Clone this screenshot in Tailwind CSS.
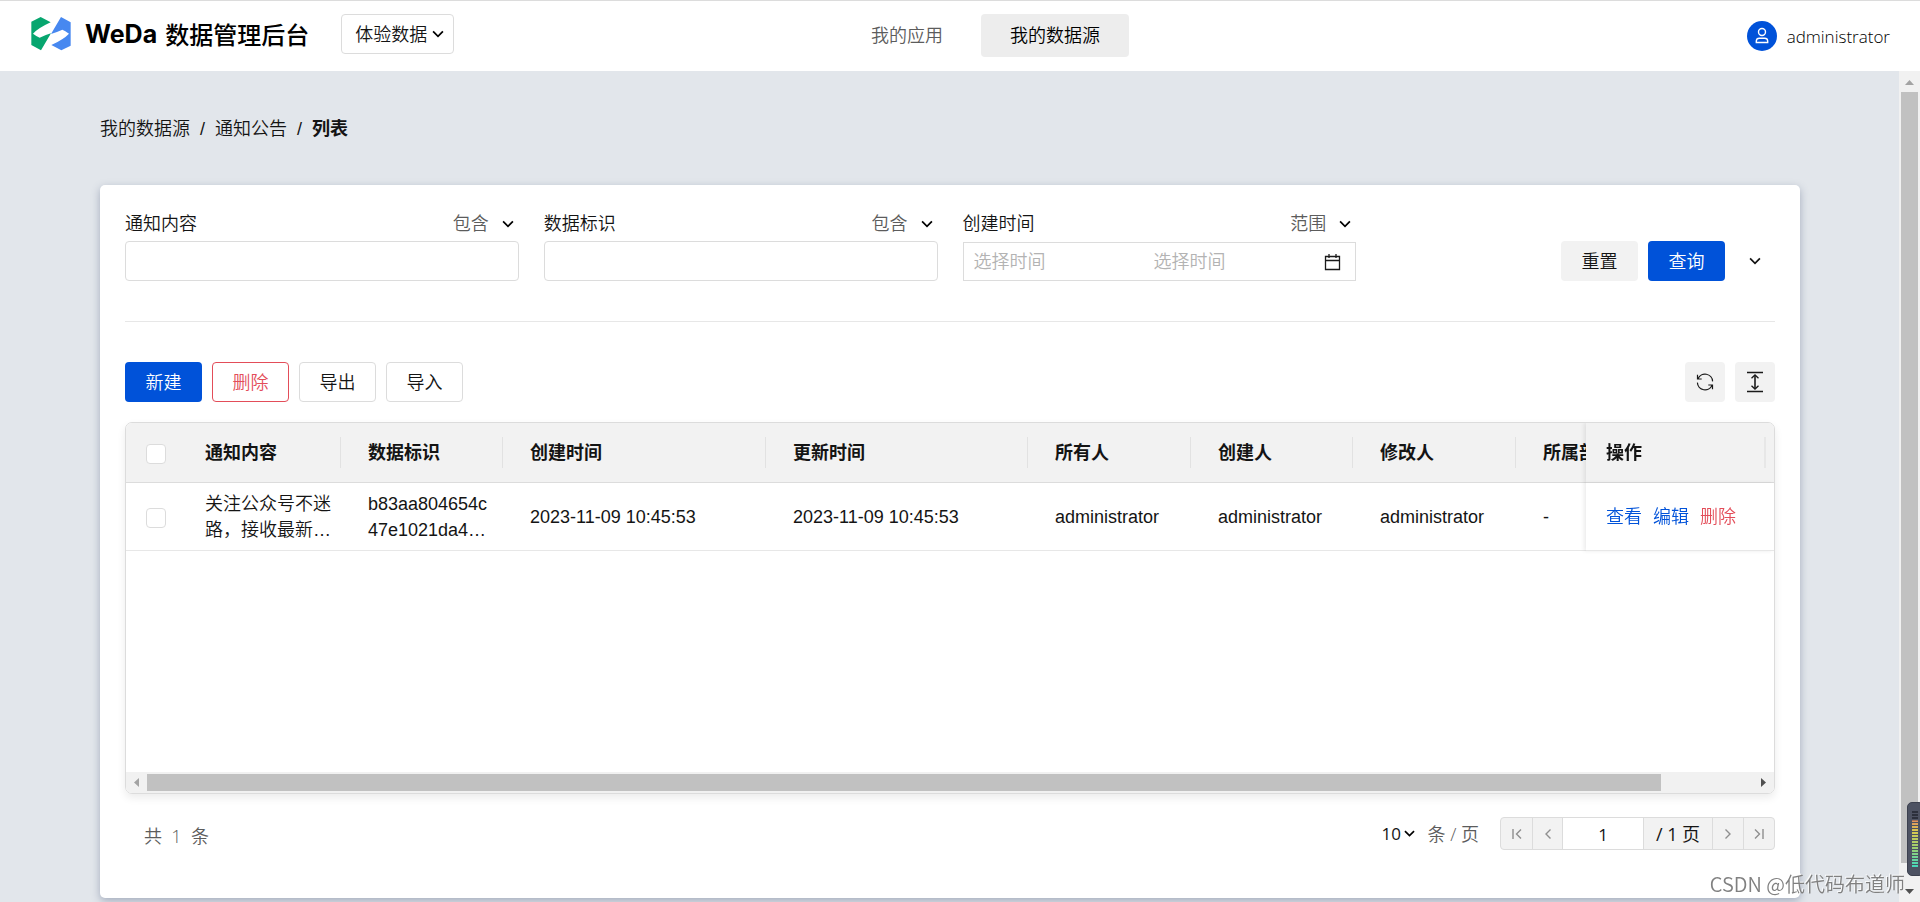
<!DOCTYPE html>
<html lang="zh-CN">
<head>
<meta charset="utf-8">
<title>WeDa 数据管理后台</title>
<script src="https://cdn.jsdelivr.net/npm/@tailwindcss/browser@4"></script>
</head>
<body class="flex h-screen flex-col overflow-hidden bg-[#e2e6eb] font-['Liberation_Sans','Noto_Sans_CJK_SC',sans-serif] text-[18px] leading-[26px] font-[350] text-[#141414]">
<svg class="hidden" aria-hidden="true">
  <symbol id="chev" viewBox="0 0 12 12"><path d="M1.800 3.800 6 8l4.200-4.200" fill="none" stroke="currentColor" stroke-width="1.500"/></symbol>
</svg>

<header class="grid h-[71px] shrink-0 grid-cols-[1fr_auto_1fr] items-center border-t border-[#dcdcdc] bg-white px-[30px]">
  <div class="flex items-center pb-[4px]">
    <svg class="h-[36px] w-[42px]" viewBox="91 52 126 108" aria-hidden="true">
      <path fill="#07a66f" d="M95 69 123 55 153 71Q116 88 100 105Q112 114 120 117Q140 108 154 104L124 155 95 139Z"/>
      <path fill="#4788f0" d="M213 141 185 155 155 139Q192 122 208 105Q196 96 188 93Q168 102 154 106L184 55 213 71Z"/>
    </svg>
    <h1 class="ml-[13px] flex items-center gap-[8px] text-[24px] leading-[36px] font-bold whitespace-nowrap text-black"><span class="font-['Inter',sans-serif] text-[25px]">WeDa</span><span class="font-['Noto_Sans_CJK_SC',sans-serif] font-medium">数据管理后台</span></h1>
    <label class="relative ml-[32px] flex items-center">
      <span class="sr-only">环境</span>
      <select class="h-[40px] w-[113px] appearance-none rounded-[4px] border border-[#dcdcdc] bg-white pt-[2px] pl-[13px]"><option>体验数据</option></select>
      <svg class="pointer-events-none absolute right-[9px] size-[14px] text-black"><use href="#chev"/></svg>
    </label>
  </div>
  <nav class="flex gap-[8px] pb-px pl-[50px]">
    <a href="#" class="rounded-[4px] px-[30px] pt-[9px] pb-[7px] leading-[27px] text-[#5c5c5c]">我的应用</a>
    <a href="#" class="rounded-[4px] bg-[#ededed] px-[29px] pt-[9px] pb-[7px] leading-[27px] text-black">我的数据源</a>
  </nav>
  <div class="flex items-center justify-end gap-[10px]">
    <svg class="size-[30px]" viewBox="0 0 30 30" aria-hidden="true">
      <circle cx="15" cy="15" r="15" fill="#0052d9"/>
      <g fill="none" stroke="#fff" stroke-width="1.400"><circle cx="15" cy="11" r="3.500"/><path d="M9.300 21.500v-1.500a3 3 0 0 1 3-2.800h5.400a3 3 0 0 1 3 2.800v1.500z"/></g>
    </svg>
    <span class="pt-px font-['Open_Sans','Noto_Sans',sans-serif] text-[17px] font-light text-black">administrator</span>
  </div>
</header>

<div class="flex min-h-0 flex-1">
  <main class="min-w-0 flex-1 overflow-hidden pt-[45px] pr-[99px] pl-[100px]">
    <nav aria-label="路径" class="mb-[43px] flex gap-[10px]">
      <a href="#">我的数据源</a><span>/</span><a href="#">通知公告</a><span>/</span><span class="font-bold">列表</span>
    </nav>

    <section class="rounded-[5px] bg-white px-[25px] pt-[24px] pb-[48px] shadow-[0_3px_8px_rgba(70,85,120,0.400)]">
      <form class="grid grid-cols-4 gap-x-[25px] border-b border-[#e7e7e7] pb-[40px]">
        <div>
          <div class="mb-[3px] flex h-[29px] items-center justify-between">
            <label for="f1">通知内容</label>
            <div class="relative flex items-center"><select aria-label="通知内容条件" class="w-[66px] appearance-none bg-transparent text-[#5c5c5c]"><option>包含</option></select><svg class="pointer-events-none absolute right-[4px] size-[14px] text-black"><use href="#chev"/></svg></div>
          </div>
          <input id="f1" type="text" class="block h-[40px] w-full rounded-[4px] border border-[#dcdcdc] px-[10px]">
        </div>
        <div>
          <div class="mb-[3px] flex h-[29px] items-center justify-between">
            <label for="f2">数据标识</label>
            <div class="relative flex items-center"><select aria-label="数据标识条件" class="w-[66px] appearance-none bg-transparent text-[#5c5c5c]"><option>包含</option></select><svg class="pointer-events-none absolute right-[4px] size-[14px] text-black"><use href="#chev"/></svg></div>
          </div>
          <input id="f2" type="text" class="block h-[40px] w-full rounded-[4px] border border-[#dcdcdc] px-[10px]">
        </div>
        <div>
          <div class="mb-[4px] flex h-[29px] items-center justify-between">
            <label for="f3">创建时间</label>
            <div class="relative flex items-center"><select aria-label="创建时间条件" class="w-[66px] appearance-none bg-transparent text-[#5c5c5c]"><option>范围</option></select><svg class="pointer-events-none absolute right-[4px] size-[14px] text-black"><use href="#chev"/></svg></div>
          </div>
          <div class="flex h-[39px] items-center border border-[#dcdcdc] pt-px pr-[14px] pl-[10px]">
            <input id="f3" type="text" placeholder="选择时间" class="w-[180px] min-w-0 placeholder:text-[#b3b3b3]">
            <input type="text" aria-label="结束时间" placeholder="选择时间" class="min-w-0 flex-1 placeholder:text-[#b3b3b3]">
            <svg class="size-[18px]" viewBox="0 0 18 18" fill="none" stroke="#1a1a1a" stroke-width="1.300" aria-hidden="true"><path d="M2.500 3.500h14v13h-14zM2.500 7.500h14M6 1v4M13 1v4"/></svg>
          </div>
        </div>
        <div class="flex items-end justify-end gap-[10px]">
          <button type="reset" class="h-[40px] w-[77px] rounded-[4px] bg-[#f2f2f2] pt-px">重置</button>
          <button type="submit" class="h-[40px] w-[77px] rounded-[4px] bg-[#0052d9] pt-px text-white">查询</button>
          <button type="button" aria-label="展开" class="flex size-[40px] items-center justify-center"><svg class="size-[14px]"><use href="#chev"/></svg></button>
        </div>
      </form>

      <div class="flex gap-[10px] pt-[40px] pb-[20px]">
        <button class="h-[40px] w-[77px] rounded-[4px] bg-[#0052d9] pt-px text-white">新建</button>
        <button class="h-[40px] w-[77px] rounded-[4px] border border-[#e34d59] pt-px text-[#e34d59]">删除</button>
        <button class="h-[40px] w-[77px] rounded-[4px] border border-[#dcdcdc] pt-px">导出</button>
        <button class="h-[40px] w-[77px] rounded-[4px] border border-[#dcdcdc] pt-px">导入</button>
        <button aria-label="刷新" class="ml-auto flex size-[40px] items-center justify-center rounded-[4px] bg-[#f2f2f2]">
          <svg class="size-[18px]" viewBox="0 0 18 18" fill="none" stroke="#1a1a1a" stroke-width="1.200" aria-hidden="true"><path d="M1.500 1.800v4.200h4.200M2 5.800a7.600 7.600 0 0 1 14.600 2.600M16.500 16.200V12h-4.200M16 12.200A7.600 7.600 0 0 1 1.400 9.600"/></svg>
        </button>
        <button aria-label="行高" class="flex size-[40px] items-center justify-center rounded-[4px] bg-[#f2f2f2]">
          <svg class="h-[22px] w-[18px]" viewBox="0 0 18 22" fill="none" stroke="#1a1a1a" stroke-width="1.300" aria-hidden="true"><path d="M1 1.500h16M1 20.500h16M5.500 7.300 9 4l3.500 3.300M5.500 14.700 9 18l3.500-3.300"/><path d="M9 4v14" stroke-width="1.600"/></svg>
        </button>
      </div>

      <div class="overflow-hidden rounded-[7px] border border-[#dcdcdc] shadow-[0_4px_8px_rgba(0,0,0,0.080)]">
        <div class="h-[349px] overflow-hidden">
          <table class="w-[1745px] table-fixed border-separate border-spacing-0 text-left">
            <colgroup><col class="w-[54px]"><col class="w-[163px]"><col class="w-[162px]"><col class="w-[263px]"><col class="w-[262px]"><col class="w-[163px]"><col class="w-[162px]"><col class="w-[163px]"><col><col class="w-[188px]"></colgroup>
            <thead>
              <tr class="h-[60px] bg-[#f2f2f2] font-bold *:border-b *:border-[#dcdcdc]">
                <th class="pt-[2px] pl-[20px]"><input type="checkbox" aria-label="全选" class="block size-[20px] appearance-none rounded-[4px] border border-[#dcdcdc] bg-white"></th>
                <th class="pr-[2px] pl-[25px]"><div class="flex h-[31px] items-center border-r border-[#e2e2e2]">通知内容</div></th>
                <th class="pr-[2px] pl-[25px]"><div class="flex h-[31px] items-center border-r border-[#e2e2e2]">数据标识</div></th>
                <th class="pr-[2px] pl-[25px]"><div class="flex h-[31px] items-center border-r border-[#e2e2e2]">创建时间</div></th>
                <th class="pr-[2px] pl-[25px]"><div class="flex h-[31px] items-center border-r border-[#e2e2e2]">更新时间</div></th>
                <th class="pr-[2px] pl-[25px]"><div class="flex h-[31px] items-center border-r border-[#e2e2e2]">所有人</div></th>
                <th class="pr-[2px] pl-[25px]"><div class="flex h-[31px] items-center border-r border-[#e2e2e2]">创建人</div></th>
                <th class="pr-[2px] pl-[25px]"><div class="flex h-[31px] items-center border-r border-[#e2e2e2]">修改人</div></th>
                <th class="pl-[25px]"><div class="flex h-[31px] items-center whitespace-nowrap">所属部门</div></th>
                <th class="sticky right-0 bg-[#f2f2f2] pr-[8px] pl-[20px] shadow-[-2px_0_4px_rgba(0,0,0,0.080)]"><div class="flex h-[31px] items-center border-r-2 border-[#e7e7e7]">操作</div></th>
              </tr>
            </thead>
            <tbody>
              <tr class="h-[68px] *:border-b *:border-[#e7e7e7]">
                <td class="pt-[2px] pl-[20px]"><input type="checkbox" aria-label="选择此行" class="block size-[20px] appearance-none rounded-[4px] border border-[#dcdcdc] bg-white"></td>
                <td class="pr-[10px] pl-[25px] break-all">关注公众号不迷路，接收最新…</td>
                <td class="pr-[16px] pl-[25px] break-all">b83aa804654c47e1021da4…</td>
                <td class="pl-[25px]">2023-11-09 10:45:53</td>
                <td class="pl-[25px]">2023-11-09 10:45:53</td>
                <td class="pl-[25px]">administrator</td>
                <td class="pl-[25px]">administrator</td>
                <td class="pl-[25px]">administrator</td>
                <td class="pl-[25px]">-</td>
                <td class="sticky right-0 bg-white pl-[20px] whitespace-nowrap shadow-[-2px_0_4px_rgba(0,0,0,0.080)]"><div class="flex gap-[11px]"><a href="#" class="text-[#0052d9]">查看</a><a href="#" class="text-[#0052d9]">编辑</a><a href="#" class="text-[#e34d59]">删除</a></div></td>
              </tr>
            </tbody>
          </table>
        </div>
        <div class="flex h-[21px] items-center bg-[#f1f1f1]" aria-hidden="true">
          <svg class="h-[21px] w-[21px] shrink-0" viewBox="0 0 21 21"><path fill="#a3a3a3" d="M13 6v9L8 10.500z"/></svg>
          <div class="h-[17px] flex-1"><div class="h-full w-[94.300%] bg-[#c1c1c1]"></div></div>
          <svg class="h-[21px] w-[21px] shrink-0" viewBox="0 0 21 21"><path fill="#505050" d="M8 6v9l5-4.500z"/></svg>
        </div>
      </div>

      <div class="mt-[23px] flex h-[33px] items-center font-['Open_Sans','Noto_Sans_CJK_SC',sans-serif]">
        <span class="mr-auto pt-[4px] pl-[19px] text-[#5c5c5c]">共&nbsp; 1 &nbsp;条</span>
        <label class="relative mr-[21px] flex items-center gap-[12px] text-[#5c5c5c]">
          <select class="w-[34px] appearance-none text-[17px] font-normal text-[#141414]"><option>10</option></select>
          <svg class="pointer-events-none absolute left-[21px] size-[13px] text-black"><use href="#chev"/></svg>
          <span>条 / 页</span>
        </label>
        <div class="flex h-[33px] divide-x divide-[#dcdcdc] overflow-hidden rounded-[4px] border border-[#dcdcdc] bg-[#f2f2f2] text-[#8f8f8f]">
          <button aria-label="首页" class="flex w-[32px] items-center justify-center"><svg class="size-[12px]" viewBox="0 0 12 12" fill="none" stroke="currentColor" stroke-width="1.400"><path d="M2 1v10M10 1.500 5.500 6l4.500 4.500"/></svg></button>
          <button aria-label="上一页" class="flex w-[30px] items-center justify-center"><svg class="size-[12px]" viewBox="0 0 12 12" fill="none" stroke="currentColor" stroke-width="1.400"><path d="M8.500 1.500 4 6l4.500 4.500"/></svg></button>
          <input aria-label="页码" type="text" value="1" class="w-[81px] bg-white pt-[2px] text-center text-[17px] font-normal text-[#141414]">
          <span class="flex w-[69px] items-center justify-center font-normal text-[#141414]">/ 1 页</span>
          <button aria-label="下一页" class="flex w-[31px] items-center justify-center"><svg class="size-[12px]" viewBox="0 0 12 12" fill="none" stroke="currentColor" stroke-width="1.400"><path d="M3.500 1.500 8 6l-4.500 4.500"/></svg></button>
          <button aria-label="末页" class="flex w-[30px] items-center justify-center"><svg class="size-[12px]" viewBox="0 0 12 12" fill="none" stroke="currentColor" stroke-width="1.400"><path d="M10 1v10M2 1.500 6.500 6 2 10.500"/></svg></button>
        </div>
      </div>
    </section>
  </main>

  <div class="flex w-[21px] shrink-0 flex-col items-center bg-[#f1f1f1]" aria-hidden="true">
    <svg class="size-[21px] shrink-0" viewBox="0 0 21 21"><path fill="#a3a3a3" d="M6 14h9l-4.500-5z"/></svg>
    <div class="w-[17px] flex-1 bg-[#c1c1c1]"></div>
    <svg class="mt-[18px] size-[21px] shrink-0" viewBox="0 0 21 21"><path fill="#505050" d="M6 8h9l-4.500 5z"/></svg>
  </div>
</div>

<!-- floating level meter -->
<div class="fixed right-[-4px] bottom-[26px] flex h-[74px] w-[17px] rounded-[5px] border border-[#3c404e] bg-[#4d5262] py-[8px] pl-[4px]" aria-hidden="true">
  <svg class="h-[57px] w-[6px]" viewBox="0 0 6 57">
    <defs><linearGradient id="lv" x1="0" y1="0" x2="0" y2="57" gradientUnits="userSpaceOnUse"><stop offset=".16" stop-color="#2c303c"/><stop offset=".17" stop-color="#e09060"/><stop offset=".35" stop-color="#d8c850"/><stop offset=".65" stop-color="#9cd070"/><stop offset="1" stop-color="#3fd8c0"/></linearGradient></defs>
    <rect width="6" height="57" fill="url(#lv)"/>
    <path d="M3 2v55" stroke="#4d5262" stroke-width="6" stroke-dasharray="1 2"/>
  </svg>
</div>
<!-- author mark -->
<div class="pointer-events-none fixed right-[15px] bottom-[4px] font-['Noto_Sans_CJK_SC',sans-serif] text-[20px] leading-[28px] font-[350] whitespace-nowrap text-[#808080] [text-shadow:-1px_-1px_0_rgba(255,255,255,0.800)]">CSDN @低代码布道师</div>
</body>
</html>
